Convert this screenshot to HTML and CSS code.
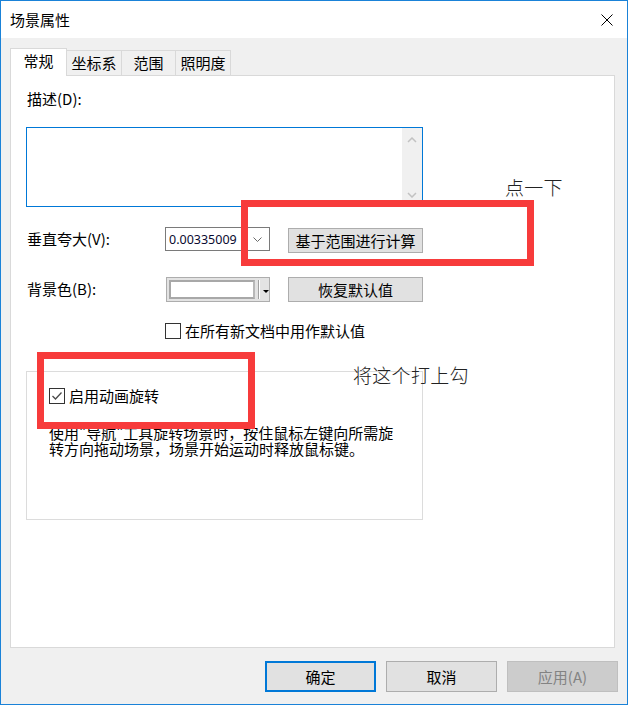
FILE: index.html
```html
<!DOCTYPE html>
<html lang="zh-CN">
<head>
<meta charset="UTF-8">
<meta name="viewport" content="width=device-width, initial-scale=1.0">
<title>场景属性</title>
<link rel="stylesheet" href="styles.css">
</head>
<body>

<div class="window">
  <div class="titlebar">
    <span class="title">场景属性</span>
    <svg class="close" width="12" height="12" viewBox="0 0 12 12">
      <path d="M0.5 0.5 L11.5 11.5 M11.5 0.5 L0.5 11.5" stroke="#000" stroke-width="1" fill="none"/>
    </svg>
  </div>

  <div class="client">
    <div class="tabs">
      <div class="tab tab-active">常规</div>
      <div class="tab tab-w55">坐标系</div>
      <div class="tab tab-w54">范围</div>
      <div class="tab tab-w55">照明度</div>
    </div>

    <div class="panel">
      <div class="field-label">描述(D):</div>
      <div class="textarea">
        <div class="vscroll">
          <svg width="10" height="6" viewBox="0 0 10 6"><path d="M1 5 L5 1 L9 5" stroke="#c2c2c2" stroke-width="1.5" fill="none"/></svg>
          <svg width="10" height="6" viewBox="0 0 10 6"><path d="M1 1 L5 5 L9 1" stroke="#c2c2c2" stroke-width="1.5" fill="none"/></svg>
        </div>
      </div>

      <div class="row row-exag">
        <span class="row-label">垂直夸大(V):</span>
        <div class="combo">
          <span class="combo-value">0.00335009</span>
          <svg class="combo-arrow" width="9" height="5" viewBox="0 0 9 5"><path d="M0.5 0.5 L4.5 4.5 L8.5 0.5" stroke="#6a6a6a" stroke-width="1" fill="none"/></svg>
        </div>
        <button class="btn btn-side btn-calc">基于范围进行计算</button>
      </div>

      <div class="row row-color">
        <span class="row-label">背景色(B):</span>
        <div class="color-pick">
          <span class="swatch"></span>
          <span class="sep"></span>
          <span class="caret"></span>
        </div>
        <button class="btn btn-side">恢复默认值</button>
      </div>

      <div class="check check-default">
        <span class="box"></span>
        <span>在所有新文档中用作默认值</span>
      </div>

      <div class="group">
        <div class="check">
          <span class="box">
            <svg width="14" height="14" viewBox="0 0 14 14"><path d="M2.5 7 L5.5 10 L11.5 3.5" stroke="#4a4a4a" stroke-width="1.3" fill="none"/></svg>
          </span>
          <span>启用动画旋转</span>
        </div>
        <p class="hint">使用"导航"工具旋转场景时，按住鼠标左键向所需旋<br>转方向拖动场景，场景开始运动时释放鼠标键。</p>
      </div>
    </div>

    <div class="actions">
      <button class="btn btn-action btn-default">确定</button>
      <button class="btn btn-action">取消</button>
      <button class="btn btn-action btn-disabled">应用(A)</button>
    </div>
  </div>

  <!-- annotations drawn over the dialog -->
  <div class="mark mark-calc"></div>
  <div class="mark mark-check"></div>
  <div class="note note-calc">点一下</div>
  <div class="note note-check">将这个打上勾</div>
</div>

</body>
</html>
```

FILE: styles.css
```css
/* dialog styles */
body, html {
  margin: 0;
  padding: 0;
  background-color: #ffffff;
}

.window {
  position: relative;
  width: 628px;
  height: 705px;
  box-sizing: border-box;
  border: 1px solid #1a82d8;
  display: flex;
  flex-direction: column;
  font-family: "Noto Sans CJK SC", "Noto Sans", sans-serif;
  font-size: 15px;
  color: #000000;
  overflow: hidden;
}

.titlebar {
  height: 37px;
  flex: none;
  background-color: #ffffff;
  display: flex;
  align-items: center;
  justify-content: space-between;
  padding: 0 14px 0 9px;
}

.title {
  line-height: 20px;
}

.close {
  display: block;
}

.client {
  flex: 1;
  background-color: #f0f0f0;
  padding: 10px 9px 0 9px;
}

/* tabs */
.tabs {
  display: flex;
  align-items: flex-end;
  height: 28px;
  position: relative;
  z-index: 1;
}

.tab {
  box-sizing: border-box;
  height: 25px;
  margin-bottom: 1px;
  margin-left: -1px;
  border: 1px solid #d9d9d9;
  border-bottom: none;
  background-color: #f0f0f0;
  text-align: center;
  line-height: 23px;
}

.tab-active {
  width: 57px;
  height: 28px;
  margin-left: 0;
  margin-bottom: 0;
  background-color: #ffffff;
  line-height: 23px;
}

.tab-w55 {
  width: 56px;
}

.tab-w54 {
  width: 55px;
}

.panel {
  box-sizing: border-box;
  width: 605px;
  height: 573px;
  margin-top: -1px;
  border: 1px solid #d9d9d9;
  background-color: #ffffff;
  padding: 13px 0 0 15px;
}

.field-label {
  line-height: 20px;
  padding-left: 1px;
}

.textarea {
  box-sizing: border-box;
  width: 397px;
  height: 80px;
  margin-top: 18px;
  border: 1px solid #0078d7;
  display: flex;
  justify-content: flex-end;
}

.vscroll {
  width: 20px;
  background-color: #f0f0f0;
  display: flex;
  flex-direction: column;
  justify-content: space-between;
  align-items: center;
  padding: 9px 0 8px 0;
}

.vscroll svg {
  display: block;
}

/* rows */
.row {
  display: flex;
  align-items: flex-start;
}

.row-exag {
  margin-top: 20px;
}

.row-color {
  margin-top: 24px;
}

.row-label {
  width: 139px;
  padding-left: 1px;
  box-sizing: border-box;
  line-height: 24px;
  flex: none;
}

.combo {
  box-sizing: border-box;
  width: 105px;
  height: 24px;
  border: 1px solid #7a7a7a;
  display: flex;
  align-items: center;
  justify-content: space-between;
  padding: 0 7px 0 3px;
  font-family: "Noto Sans", sans-serif;
  font-size: 12.5px;
  color: #0a0a30;
}

.combo-arrow {
  display: block;
}

.color-pick {
  box-sizing: border-box;
  width: 104px;
  height: 25px;
  margin-left: 1px;
  border: 1px solid #adadad;
  background-color: #e3e3e3;
  display: flex;
  align-items: center;
  padding: 0 0 0 2px;
}

.swatch {
  box-sizing: border-box;
  width: 87px;
  height: 19px;
  border: 2px solid #a8a8a8;
  border-right-color: #b8b8b8;
  background-color: #ffffff;
}

.sep {
  width: 1px;
  height: 19px;
  margin-left: 3px;
  background-color: #a0a0a0;
  border-right: 1px solid #ffffff;
}

.caret {
  width: 0;
  height: 0;
  margin-left: 3px;
  margin-top: 3px;
  border-left: 3px solid transparent;
  border-right: 3px solid transparent;
  border-top: 3px solid #000000;
}

.btn {
  box-sizing: border-box;
  font-family: inherit;
  font-size: 15px;
  color: #000000;
  background-color: #e1e1e1;
  border: 1px solid #adadad;
  padding: 0;
  cursor: pointer;
}

.btn-side {
  width: 135px;
  height: 25px;
  margin-left: 18px;
  line-height: 22px;
}

.btn-calc {
  margin-top: 1px;
}

/* checkboxes */
.check {
  display: flex;
  align-items: center;
  line-height: 16px;
}

.check-default {
  margin-top: 21px;
  padding-left: 139px;
}

.box {
  box-sizing: border-box;
  width: 16px;
  height: 16px;
  border: 1px solid #333333;
  background-color: #ffffff;
  margin-right: 4px;
  flex: none;
  display: flex;
  align-items: center;
  justify-content: center;
}

.group {
  box-sizing: border-box;
  width: 397px;
  height: 149px;
  margin-top: 32px;
  border: 1px solid #dcdcdc;
  padding: 16px 0 0 22px;
}

.hint {
  margin: 21px 0 0 0;
  line-height: 16px;
  white-space: nowrap;
}

/* bottom buttons */
.actions {
  display: flex;
  justify-content: flex-end;
  gap: 10px;
  margin-top: 13px;
}

.btn-action {
  width: 111px;
  height: 31px;
}

.btn-default {
  border: 2px solid #0078d7;
}

.btn-disabled {
  background-color: #cccccc;
  border-color: #bfbfbf;
  color: #838383;
}

/* red annotations */
.mark {
  position: absolute;
  box-sizing: border-box;
  border: 7px solid #f73b3b;
}

.mark-calc {
  left: 240px;
  top: 199px;
  width: 293px;
  height: 66px;
}

.mark-check {
  left: 36px;
  top: 351px;
  width: 218px;
  height: 77px;
}

.note {
  position: absolute;
  font-size: 19px;
  font-weight: 300;
  line-height: 20px;
  color: #222222;
  letter-spacing: 0.3px;
}

.note-calc {
  left: 504px;
  top: 176px;
}

.note-check {
  left: 352px;
  top: 364px;
}
```
